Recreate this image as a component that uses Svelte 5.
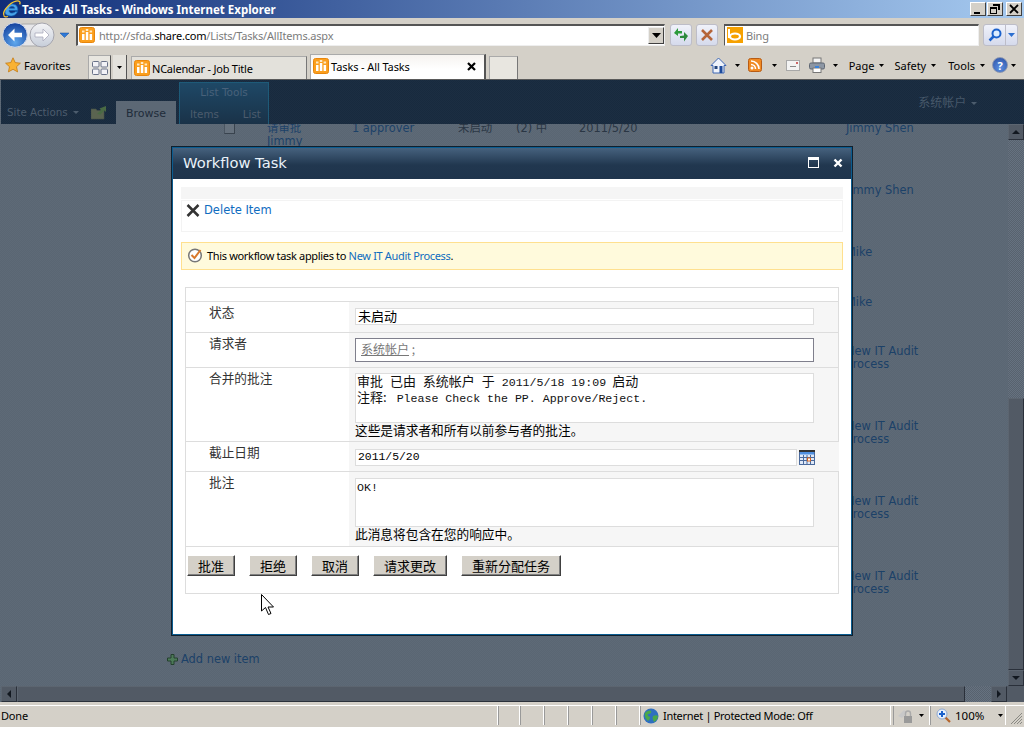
<script>
  const rows = [
    { h: 62, title: "请审批", sub: "Jimmy", approver: "1 approver", status: "未启动", prio: "(2) 中", date: "2011/5/20", who: "Jimmy Shen" },
    { h: 62, who: "Jimmy Shen" },
    { h: 50, who: "Mike" },
    { h: 49, who: "Mike" },
    { h: 75, who: "New IT Audit Process" },
    { h: 75, who: "New IT Audit Process" },
    { h: 75, who: "New IT Audit Process" },
    { h: 83, who: "New IT Audit Process" }
  ];
  const buttons = ["批准", "拒绝", "取消", "请求更改", "重新分配任务"];
  const cells = [22, 24, 24, 24, 24, 24];
</script>

{#snippet favicon()}
  <svg class="favicon" width="16" height="16" viewBox="0 0 16 16">
    <rect x="0.5" y="0.5" width="15" height="15" rx="2" fill="#fb9f1d" stroke="#e8860c" />
    <rect x="3" y="7" width="2.5" height="6" fill="#fff" />
    <rect x="6.8" y="5" width="2.5" height="8" fill="#fff" />
    <rect x="10.6" y="7" width="2.5" height="6" fill="#fff" />
    <rect x="3" y="3.5" width="2.5" height="2" fill="#ffe9c4" />
    <rect x="6.8" y="2" width="2.5" height="2" fill="#ffe9c4" />
    <rect x="10.6" y="3.5" width="2.5" height="2" fill="#ffe9c4" />
  </svg>
{/snippet}

{#snippet arrow()}
  <svg class="arrow" width="5" height="3" viewBox="0 0 5 3"><path d="M0 0H5L2.500 3Z" fill="#000" /></svg>
{/snippet}

<div class="window">
  <header class="titlebar">
    <svg class="ie" width="20" height="18" viewBox="0 0 20 18">
      <path d="M3 12.5C3 7.500 7 4 10.500 4c3.600 0 5.600 2.800 5.400 6.400H7c.2 2.800 3.800 3.600 6.400 1.200h2.400C14 15 11.500 16 9.500 16 6 16 3 15 3 12.500ZM7.200 8.200h5.400C12.400 6 8 6 7.200 8.200Z" fill="#4aa3e8" stroke="#0f5cad" stroke-width=".7" />
      <path d="M2 15C0 12 7 3 14 1.200c3-.8 5 .4 3.600 3.200M2 15c-.5 1.500 1.500 2.500 4 1.500" fill="none" stroke="#f2c230" stroke-width="1.300" />
    </svg>
    <span class="title-text">Tasks - All Tasks - Windows Internet Explorer</span>
    <div class="win-btns">
      <button class="win-btn"><svg width="10" height="10" viewBox="0 0 10 10"><rect x="1" y="8" width="6" height="2" /></svg></button>
      <button class="win-btn"><svg width="10" height="10" viewBox="0 0 10 10"><path d="M3 0h7v6H8V2H3ZM0 3h7v7H0Zm1 2v4h5V5Z" fill-rule="evenodd" /></svg></button>
      <button class="win-btn close"><svg width="10" height="10" viewBox="0 0 10 10"><path d="M1 1l8 8M9 1l-8 8" stroke="#000" stroke-width="1.800" /></svg></button>
    </div>
  </header>

  <div class="addressbar">
    <svg class="nav" width="68" height="26" viewBox="0 0 68 26">
      <defs>
        <radialGradient id="blue" cx=".5" cy=".8" r=".8"><stop offset="0" stop-color="#5fa8ee" /><stop offset="1" stop-color="#123f9c" /></radialGradient>
        <linearGradient id="pale" x1="0" y1="0" x2="0" y2="1"><stop offset="0" stop-color="#f4f4f6" /><stop offset="1" stop-color="#c6cdd9" /></linearGradient>
      </defs>
      <rect x="10" y="2" width="38" height="22" rx="11" fill="#e6e6e8" stroke="#aaa" />
      <circle cx="40" cy="13" r="12" fill="url(#pale)" stroke="#a5a5ad" />
      <path d="M33 13l6-6v4h8v4h-8v4Z" transform="rotate(180 40 13)" fill="#fff" stroke="#aab" stroke-width=".8" />
      <circle cx="13" cy="13" r="12.300" fill="url(#blue)" stroke="#d5dbe8" stroke-width="1" />
      <path d="M6 13l6.500-6.500v4.200H20v4.600h-7.500v4.200Z" fill="#fff" />
      <path d="M58 11h9l-4.500 4.500Z" fill="#2c78d8" stroke="#1b4f9a" stroke-width=".5" />
    </svg>
    <div class="address">
      {@render favicon()}
      <span class="url">http://sfda.<b>share.com</b>/Lists/Tasks/AllItems.aspx</span>
      <span class="combo"><svg width="9" height="5" viewBox="0 0 9 5"><path d="M0 0h9L4.500 5Z" /></svg></span>
    </div>
    <button class="glass first">
      <svg width="16" height="16" viewBox="0 0 16 16"><path d="M1 6l4-5v3h4v2.500H5V9Z" fill="#2c9a3c" /><path d="M15 9l-4 5.500V11H7V9l4-.5V5Z" fill="#2c8a3c" /></svg>
    </button>
    <button class="glass">
      <svg width="14" height="14" viewBox="0 0 14 14"><path d="M2 2l10 10M12 2L2 12" stroke="#b5653a" stroke-width="2.600" /></svg>
    </button>
    <div class="search">
      <svg width="16" height="16" viewBox="0 0 16 16"><rect width="16" height="16" fill="#f6a100" /><path d="M2 2v9" stroke="#fff" stroke-width="2" /><ellipse cx="8" cy="9.500" rx="5" ry="3" fill="none" stroke="#fff" stroke-width="2.200" /></svg>
      <span class="bing">Bing</span>
    </div>
    <div class="search-btn">
      <span class="mag"><svg width="14" height="14" viewBox="0 0 14 14"><circle cx="8.500" cy="5.500" r="4" fill="#dcecff" stroke="#1c62cc" stroke-width="2" /><path d="M5.500 8.500L1.500 12.500" stroke="#1c62cc" stroke-width="2.500" /></svg></span>
      <span class="mag-drop"><svg width="7" height="4" viewBox="0 0 7 4"><path d="M0 0H7L3.500 4Z" fill="#2c6fd0" /></svg></span>
    </div>
  </div>

  <div class="tabbar">
    <svg class="star" width="16" height="16" viewBox="0 0 16 16"><path d="M8 .8l2.200 4.800 5.200.6-3.900 3.500 1.100 5.200L8 12.300 3.400 14.900l1.100-5.200L.6 6.200l5.200-.6Z" fill="#f9b233" stroke="#c47a12" stroke-width=".8" /></svg>
    <span class="fav">Favorites</span>
    <div class="quick">
      <svg width="16" height="14" viewBox="0 0 16 14"><g fill="#f2f2f6" stroke="#6a7288"><rect x=".5" y=".5" width="6.500" height="5.500" rx="1" /><rect x="9" y=".5" width="6.500" height="5.500" rx="1" /><rect x=".5" y="8" width="6.500" height="5.500" rx="1" /><rect x="9" y="8" width="6.500" height="5.500" rx="1" /></g></svg>
    </div>
    <div class="quick-drop">{@render arrow()}</div>
    <div class="tab">{@render favicon()}<span>NCalendar - Job Title</span></div>
    <div class="tab active">{@render favicon()}<span>Tasks - All Tasks</span>
      <svg class="tab-x" width="9" height="9" viewBox="0 0 9 9"><path d="M1 1l7 7M8 1L1 8" stroke="#000" stroke-width="2.200" /></svg>
    </div>
    <div class="tab newtab"></div>

    <div class="tools">
      <svg class="pr3" width="17" height="17" viewBox="0 0 17 17"><path d="M8.500 1L1 8.500h2V16h11V8.500h2Z" fill="#eef2fa" stroke="#3c66b4" /><rect x="9.500" y="9" width="3" height="7" fill="#1c4a9c" /><rect x="4.500" y="9" width="3" height="3" fill="#23457c" /></svg>
      {@render arrow()}
      <svg class="gap-rss" width="14" height="14" viewBox="0 0 14 14"><rect x=".5" y=".5" width="13" height="13" rx="2" fill="#f08a24" stroke="#b85c14" /><circle cx="4" cy="10" r="1.500" fill="#fff" /><path d="M3 6.500a4.500 4.500 0 0 1 4.500 4.500M3 3a8 8 0 0 1 8 8" fill="none" stroke="#fff" stroke-width="1.600" /></svg>
      {@render arrow()}
      <svg class="gap-m" width="14" height="11" viewBox="0 0 14 11"><rect x=".5" y=".5" width="13" height="10" fill="#f3f3f3" stroke="#a8a8a8" /><rect x="4" y="6" width="6" height="1" fill="#888" /><rect x="10" y="2" width="2" height="2" fill="#c66" /></svg>
      <svg class="gap-m pr3" width="16" height="16" viewBox="0 0 16 16"><rect x="4" y="1" width="8" height="5" fill="#f3f3f3" stroke="#777" /><rect x=".5" y="6" width="15" height="6" rx="1.500" fill="#8c96a4" stroke="#5e6672" /><rect x="4" y="11" width="8" height="4.500" fill="#fff" stroke="#777" /><rect x="6" y="9" width="4" height="2" fill="#3b82d8" /></svg>
      {@render arrow()}
      <span class="menu first-menu">Page</span>{@render arrow()}
      <span class="menu safety">Safety</span>{@render arrow()}
      <span class="menu tools-menu">Tools</span>{@render arrow()}
      <span class="help">?</span>{@render arrow()}
    </div>
  </div>

  <main class="content">
    <div class="ribbon">
      <span class="site-actions">Site Actions <i class="tri"></i></span>
      <svg class="folder" width="16" height="15" viewBox="0 0 16 15"><path d="M0 4h5l1 1.500h7V14H0Z" fill="#5a6450" stroke="#465048" stroke-width=".6" /><path d="M6 9l4-4-1.500-1.500L15 1v6l-1.500-1.500-4 4Z" fill="#4a6a44" /></svg>
      <span class="browse">Browse</span>
      <div class="listtools">
        <div class="lt-head">List Tools</div>
        <div class="lt-tabs"><span>Items</span><span>List</span></div>
      </div>
      <span class="user">系统帐户 <i class="tri"></i></span>
    </div>

    <div class="mid">
      <div class="list">
        <div class="rows">
          {#each rows as r}
            <div class="row" style="height:{r.h}px">
              <span>{#if r.title}<i class="check"></i>{/if}</span>
              <span class="link">{#if r.title}{r.title}<br />{r.sub}{/if}</span>
              <span class="link">{r.approver ?? ""}</span>
              <span>{r.status ?? ""}</span>
              <span>{r.prio ?? ""}</span>
              <span>{r.date ?? ""}</span>
              <span class="link who">{r.who}</span>
            </div>
          {/each}
        </div>
        <div class="add">
          <svg width="11" height="11" viewBox="0 0 11 11"><path d="M4 .5h3v3.500h3.500v3H7v3.500H4V7H.5V4H4Z" fill="#4c7a58" stroke="#24402e" /></svg>
          <span>Add new item</span>
        </div>
      </div>
      <div class="vbar">
        <div class="sbtn"><i class="up"></i></div>
        <div class="vtrack"></div>
        <div class="vthumb"></div>
        <div class="sbtn"><i class="down"></i></div>
      </div>
    </div>

    <div class="hbar">
      <div class="sbtn"><i class="left"></i></div>
      <div class="hthumb"></div>
      <div class="htrack"></div>
      <div class="sbtn"><i class="right"></i></div>
      <div class="corner"></div>
    </div>
  </main>

  <footer class="statusbar">
    <div class="cell done">Done</div>
    {#each cells as w}
      <div class="cell" style="width:{w}px"></div>
    {/each}
    <div class="cell zone">
      <svg width="16" height="16" viewBox="0 0 16 16"><circle cx="8" cy="8" r="7.500" fill="#2f6fc0" /><path d="M2 5c2-2 4-3 6-2 1 2-1 3-3 3-1 2 1 2 2 3 0 2-1 3-2 4C3 11 1 8 2 5ZM10 8c2-1 4-1 5 0 0 3-2 5-4 6-1-2-2-4-1-6Z" fill="#4aa84a" /></svg>
      <span>Internet | Protected Mode: Off</span>
    </div>
    <div class="cell lock">
      <svg width="17" height="16" viewBox="0 0 17 16"><path d="M1 8l6-6 3 3-5 5Z" fill="#c8c8c8" /><rect x="7" y="8" width="8" height="7" fill="#9a9a9a" /><path d="M8.500 8V5.500a2.500 2.500 0 0 1 5 0V8" fill="none" stroke="#aaa" stroke-width="1.400" /></svg>
      {@render arrow()}
    </div>
    <div class="cell zoom">
      <svg width="15" height="15" viewBox="0 0 15 15"><path d="M9 9l5 5" stroke="#b5652c" stroke-width="2.200" /><circle cx="6" cy="6" r="5" fill="#e8f0fc" stroke="#8ea8d0" /><path d="M6 3v6M3 6h6" stroke="#1c62cc" stroke-width="2" /></svg>
      <span>100%</span>
      {@render arrow()}
    </div>
    <svg class="grip" width="13" height="13" viewBox="0 0 13 13"><path d="M12 1L1 12M12 4L4 12M12 7L7 12M12 10L10 12" stroke="#8a8a84" /></svg>
  </footer>

  <section class="dialog">
    <div class="dlg-head">
      <span class="dlg-title">Workflow Task</span>
      <svg class="dlg-icon" width="11" height="11" viewBox="0 0 11 11"><rect x=".5" y=".5" width="10" height="10" fill="none" stroke="#fff" /><rect x="1" y="1" width="9" height="2" fill="#fff" /></svg>
      <svg class="dlg-icon x" width="10" height="10" viewBox="0 0 10 10"><path d="M1.500 1.500l7 7M8.500 1.500l-7 7" stroke="#fff" stroke-width="2.400" /></svg>
    </div>
    <div class="dlg-body">
      <div class="strip"></div>
      <div class="toolbar">
        <svg width="14" height="13" viewBox="0 0 14 13"><path d="M1.500 1l11 11M12.500 1l-11 11" stroke="#333" stroke-width="2.500" /></svg>
        <a href="#top">Delete Item</a>
      </div>
      <div class="notice">
        <svg width="16" height="16" viewBox="0 0 16 16"><circle cx="8" cy="8.500" r="6.300" fill="#fdfdfd" stroke="#777" stroke-width="1.500" /><path d="M4.500 8l3 3 6-8" fill="none" stroke="#d8772a" stroke-width="2" /></svg>
        <span>This workflow task applies to <a href="#top">New IT Audit Process</a>.</span>
      </div>

      <div class="form">
        <div class="blank"></div>
        <div class="frow">
          <div class="label">状态</div>
          <div class="field f-input"><div class="box input cjk">未启动</div></div>
        </div>
        <div class="frow">
          <div class="label">请求者</div>
          <div class="field f-picker"><div class="box picker"><u>系统帐户</u> ;</div></div>
        </div>
        <div class="frow">
          <div class="label">合并的批注</div>
          <div class="field f-memo">
            <div class="box memo log">
              <div><span class="cjk gap-after">审批 已由 系统帐户 于</span>2011/5/18 19:09<span class="cjk gap-before">启动</span></div>
              <div><span class="cjk gap-note">注释:</span>Please Check the PP. Approve/Reject.</div>
            </div>
            <div class="hint">这些是请求者和所有以前参与者的批注。</div>
          </div>
        </div>
        <div class="frow">
          <div class="label">截止日期</div>
          <div class="field f-date date-field">
            <div class="box input date">2011/5/20</div>
            <svg width="16" height="15" viewBox="0 0 16 15">
              <rect x=".5" y=".5" width="15" height="14" fill="#dfe9f8" stroke="#4b6a9c" />
              <rect x="0" y="0" width="16" height="2" fill="#333" />
              <rect x="1" y="2" width="14" height="2.500" fill="#4f8fe0" />
              <path d="M1 7.500h14M1 10.500h14M4.500 5v9M8 5v9M11.500 5v9" stroke="#4b6a9c" />
              <rect x="8.500" y="8" width="3" height="3" fill="#fff" stroke="#d8641c" />
            </svg>
          </div>
        </div>
        <div class="frow">
          <div class="label">批注</div>
          <div class="field f-comment">
            <div class="box memo short">OK!</div>
            <div class="hint">此消息将包含在您的响应中。</div>
          </div>
        </div>
        <div class="actions">
          {#each buttons as b}
            <button class="act">{b}</button>
          {/each}
        </div>
      </div>
    </div>
  </section>

  <svg class="cursor" width="14" height="22" viewBox="0 0 14 22"><path d="M.5.500V17l4-3.500 3 7 2.500-1-3-6.500h5.500Z" fill="#fff" stroke="#000" /></svg>
</div>

<style>
  :global(body) {
    margin: 0;
    background: #fff;
  }

  button {
    padding: 0;
    margin: 0;
    font: inherit;
  }

  .window {
    position: relative;
    display: flex;
    flex-direction: column;
    width: 1024px;
    height: 727px;
    background: #d4d0c8;
    font-family: "Noto Sans", "Noto Sans CJK SC", sans-serif;
    font-size: 11px;
    color: #000;
    overflow: hidden;
  }

  .titlebar {
    display: flex;
    align-items: center;
    height: 18px;
    flex: 0 0 18px;
    padding-left: 2px;
    background: linear-gradient(90deg, #0f2d78, #a6caf0);
  }

  .title-text {
    color: #fff;
    font-weight: 700;
    font-size: 11.5px;
  }

  .win-btns {
    display: flex;
    gap: 1px;
    margin-left: auto;
    margin-right: 2px;
  }

  .win-btn {
    display: flex;
    align-items: center;
    justify-content: center;
    width: 16px;
    height: 14px;
    background: #d4d0c8;
    border: 1px solid;
    border-color: #fff #404040 #404040 #fff;
    box-sizing: border-box;
  }

  .win-btn.close {
    margin-left: 2px;
  }

  .addressbar {
    display: flex;
    align-items: center;
    height: 33px;
    flex: 0 0 33px;
    padding-left: 2px;
  }

  .address {
    display: flex;
    align-items: center;
    box-sizing: border-box;
    width: 589px;
    height: 22px;
    margin-left: 6px;
    padding-left: 1px;
    background: #fff;
    border: 1px solid;
    border-color: #555 #eee #eee #555;
    border-top-width: 2px;
    border-left-width: 2px;
  }

  .url {
    margin-left: 4px;
    color: #7c7c7c;
    font-size: 11px;
    letter-spacing: -.2px;
  }

  .url b {
    font-weight: 400;
    color: #000;
  }

  .combo {
    display: flex;
    align-items: center;
    justify-content: center;
    margin-left: auto;
    width: 16px;
    height: 17px;
    background: #d4d0c8;
    border: 1px solid;
    border-color: #eee #404040 #404040 #eee;
    box-sizing: border-box;
  }

  .glass {
    display: flex;
    align-items: center;
    justify-content: center;
    box-sizing: border-box;
    width: 22px;
    height: 22px;
    margin-left: 4px;
    background: linear-gradient(#f0f2fa, #d5daec);
    border: 1px solid #bdbdc8;
    border-radius: 3px;
  }

  .glass.first {
    margin-left: 5px;
  }

  .search {
    display: flex;
    align-items: center;
    box-sizing: border-box;
    width: 255px;
    height: 22px;
    margin-left: 6px;
    padding-left: 2px;
    background: #fff;
    border: 1px solid;
    border-color: #555 #eee #eee #555;
    border-top-width: 2px;
  }

  .bing {
    margin-left: 3px;
    color: #7c7c7c;
    font-size: 11px;
    letter-spacing: -.2px;
  }

  .search-btn {
    display: flex;
    box-sizing: border-box;
    width: 35px;
    height: 22px;
    margin-left: 4px;
    background: linear-gradient(#f0f2fa, #d5daec);
    border: 1px solid #bdbdc8;
    border-radius: 3px;
  }

  .mag {
    display: flex;
    align-items: center;
    justify-content: center;
    width: 21px;
    border-right: 1px solid #bdbdc8;
  }

  .mag-drop {
    display: flex;
    align-items: center;
    justify-content: center;
    flex: 1;
  }

  .tabbar {
    display: flex;
    align-items: flex-end;
    height: 28px;
    flex: 0 0 28px;
    padding-left: 5px;
    border-bottom: 1px solid #5a5a5a;
  }

  .star {
    align-self: center;
  }

  .fav {
    align-self: center;
    margin-left: 3px;
    width: 64px;
    font-size: 11px;
    letter-spacing: -.05px;
  }

  .quick {
    display: flex;
    align-items: center;
    justify-content: center;
    box-sizing: border-box;
    width: 23px;
    height: 24px;
    background: #e8e6e0;
    border: 1px solid #aaa;
    border-right-color: #555;
    border-bottom: 0;
  }

  .quick-drop {
    display: flex;
    align-items: center;
    justify-content: center;
    box-sizing: border-box;
    width: 14px;
    height: 24px;
    margin-left: 2px;
    border-right: 1px solid #555;
    background: #e4e2dc;
  }

  .quick-drop .arrow {
    margin-left: 0;
  }

  .tab {
    display: flex;
    align-items: center;
    box-sizing: border-box;
    width: 176px;
    height: 23px;
    margin-left: 4px;
    padding-left: 2px;
    background: #e3e1db;
    border: 1px solid #aaa;
    border-bottom: 0;
    border-right: 1px solid #777;
    font-size: 11px;
    letter-spacing: -.22px;
  }

  .tab span {
    margin-left: 2px;
  }

  .tab.active {
    position: relative;
    height: 25px;
    margin-left: 3px;
    padding-bottom: 2px;
    background: linear-gradient(#f6f3f0, #fff 60%);
    border-right: 2px solid #555;
    letter-spacing: -.1px;
  }

  .tab-x {
    margin-left: auto;
    margin-right: 8px;
  }

  .newtab {
    width: 29px;
    margin-left: 3px;
    background: #e8e6e0;
  }

  .tools {
    display: flex;
    align-items: center;
    align-self: center;
    margin-left: auto;
    padding-right: 8px;
    font-size: 11px;
  }

  .arrow {
    margin-left: 5px;
    flex: none;
  }

  .pr3 {
    margin-right: 3px;
  }

  .gap-rss {
    margin-left: 8px;
    margin-right: 5px;
  }

  .gap-m {
    margin-left: 9px;
  }

  .menu {
    margin-left: 11px;
  }

  .first-menu {
    margin-left: 11px;
  }

  .safety {
    margin-left: 10px;
  }

  .tools-menu {
    margin-left: 12px;
  }

  .help {
    display: flex;
    align-items: center;
    justify-content: center;
    width: 16px;
    height: 16px;
    margin-left: 7px;
    margin-right: -2px;
    border-radius: 50%;
    background: radial-gradient(circle at 50% 70%, #5c8fe0, #2a4fa4);
    border: 1px solid #8b96b0;
    box-sizing: border-box;
    color: #fff;
    font-weight: 700;
    font-size: 11px;
  }

  .content {
    display: flex;
    flex-direction: column;
    flex: 0 0 622px;
    box-sizing: border-box;
    padding-left: 1px;
    font-family: "DejaVu Sans", "Noto Sans CJK SC", sans-serif;
    background: repeating-conic-gradient(#5a6673 0 25%, #5e6a77 0 50%) 0 0 / 2px 2px;
  }

  .ribbon {
    display: flex;
    align-items: flex-end;
    flex: 0 0 44px;
    height: 44px;
    background: repeating-conic-gradient(#182a3e 0 25%, #1c2e42 0 50%) 0 0 / 2px 2px;
    color: #4c5c6d;
    position: relative;
  }

  .site-actions {
    align-self: flex-end;
    margin-left: 6px;
    margin-bottom: 6px;
    width: 84px;
    font-size: 10.3px;
  }

  .tri {
    display: inline-block;
    width: 0;
    height: 0;
    margin-left: 2px;
    vertical-align: 2px;
    border: 3px solid transparent;
    border-top: 3px solid #4c5c6d;
    border-bottom: 0;
  }

  .folder {
    margin-bottom: 4px;
  }

  .browse {
    box-sizing: border-box;
    width: 60px;
    height: 23px;
    margin-left: 9px;
    padding-top: 6px;
    text-align: center;
    color: #1f2c3a;
    background: #5c6875;
  }

  .listtools {
    box-sizing: border-box;
    width: 90px;
    height: 42px;
    margin-left: 3px;
    background: linear-gradient(#1e4866, #1a3248);
    border: 1px solid #1e5a78;
    border-bottom: 0;
  }

  .lt-head {
    text-align: center;
    padding-top: 3px;
    height: 17px;
    color: #48617a;
    font-size: 10.5px;
  }

  .lt-tabs {
    display: flex;
    padding: 5px 0 0 10px;
    gap: 24px;
    color: #4c5c6d;
    font-size: 10.3px;
  }

  .user {
    position: absolute;
    top: 13px;
    right: 47px;
    font-family: "Noto Sans CJK SC", sans-serif;
    font-size: 12px;
    color: #47586a;
  }

  .mid {
    display: flex;
    flex: 1;
    min-height: 0;
  }

  .list {
    flex: 1;
    overflow: hidden;
    color: #2a3644;
    font-size: 11.4px;
  }

  .rows {
    margin-top: -2px;
  }

  .row {
    display: grid;
    grid-template-columns: 43px 85px 106px 58px 63px 267px 88px;
    padding-left: 223px;
    line-height: 13px;
  }

  .link {
    color: #1c4168;
  }

  .check {
    display: inline-block;
    width: 9px;
    height: 10px;
    background: #66717d;
    border: 1px solid #39434e;
    border-top-color: #4a5561;
    border-left-color: #4a5561;
  }

  .add {
    display: flex;
    align-items: center;
    gap: 3px;
    padding-left: 166px;
    color: #1c4168;
    line-height: 13px;
  }

  .vbar {
    display: flex;
    flex-direction: column;
    flex: 0 0 16px;
    background: repeating-conic-gradient(#58626e 0 25%, #667280 0 50%) 0 0 / 2px 2px;
  }

  .sbtn {
    display: flex;
    align-items: center;
    justify-content: center;
    flex: 0 0 16px;
    box-sizing: border-box;
    width: 16px;
    height: 16px;
    background: #525a65;
    border: 1px solid;
    border-color: #5c6570 #2a303a #2a303a #5c6570;
  }

  .sbtn i {
    width: 0;
    height: 0;
    border: 4px solid transparent;
  }

  .up {
    border-bottom-color: #121820 !important;
    border-top: 0 !important;
  }

  .down {
    border-top-color: #121820 !important;
    border-bottom: 0 !important;
  }

  .left {
    border-right-color: #121820 !important;
    border-left: 0 !important;
  }

  .right {
    border-left-color: #121820 !important;
    border-right: 0 !important;
  }

  .vtrack {
    flex: 0 0 258px;
  }

  .vthumb {
    flex: 1;
    background: #525a65;
    border: 1px solid;
    border-color: #5c6570 #2a303a #2a303a #5c6570;
  }

  .hbar {
    display: flex;
    flex: 0 0 16px;
    height: 16px;
  }

  .hthumb {
    flex: 0 0 948px;
    box-sizing: border-box;
    background: #525a65;
    border: 1px solid;
    border-color: #5c6570 #2a303a #2a303a #5c6570;
  }

  .htrack {
    flex: 0 0 26px;
    background: repeating-conic-gradient(#58626e 0 25%, #667280 0 50%) 0 0 / 2px 2px;
  }

  .corner {
    flex: 1;
    background: #525a65;
  }

  .statusbar {
    display: flex;
    align-items: stretch;
    flex: 0 0 19px;
    margin-top: 3px;
    padding-bottom: 3px;
    border-top: 1px solid #fff;
    position: relative;
  }

  .cell {
    display: flex;
    align-items: center;
    box-sizing: border-box;
    border-left: 1px solid #999;
    border-right: 1px solid #fff;
  }

  .done {
    width: 498px;
    border-left: 0;
    padding-left: 1px;
    font-size: 11px;
    letter-spacing: -.2px;
  }

  .zone {
    width: 251px;
    padding-left: 2px;
    gap: 4px;
    font-size: 11px;
    letter-spacing: -.3px;
  }

  .lock {
    width: 37px;
    padding-left: 3px;
    margin-left: 2px;
  }

  .zoom {
    width: 76px;
    padding-left: 5px;
    gap: 4px;
    font-size: 11.5px;
  }

  .zoom .arrow {
    margin-left: 10px;
  }

  .grip {
    position: absolute;
    right: 1px;
    bottom: 3px;
  }

  .dialog {
    position: absolute;
    left: 171px;
    top: 146px;
    width: 682px;
    height: 490px;
    box-sizing: border-box;
    display: flex;
    flex-direction: column;
    border: 2px solid #0a5c90;
    outline: 1px solid #10202e;
    outline-offset: -1px;
    background: #fff;
    font-family: "Noto Sans CJK SC", sans-serif;
  }

  .dlg-head {
    display: flex;
    align-items: center;
    flex: 0 0 29px;
    padding: 0 0 2px 10px;
    background: linear-gradient(#46627e, #21374f 55%, #1f344c);
  }

  .dlg-title {
    font-family: "DejaVu Sans", sans-serif;
    font-size: 14.7px;
    color: #eaf2fa;
  }

  .dlg-icon {
    margin-left: auto;
    margin-right: 9px;
  }

  .dlg-icon.x {
    margin-left: 5px;
    margin-right: 8px;
  }

  .dlg-body {
    display: flex;
    flex-direction: column;
    padding: 8px 8px 0 8px;
  }

  .strip {
    height: 12px;
    background: #f5f5f5;
    flex: none;
  }

  .toolbar {
    display: flex;
    align-items: flex-start;
    gap: 4px;
    box-sizing: border-box;
    height: 32px;
    margin-top: 1px;
    padding: 3px 0 0 4px;
    border: 1px solid #f3f3f3;
  }

  a {
    color: #0f6cbf;
    text-decoration: none;
  }

  .toolbar a {
    font-family: "DejaVu Sans", sans-serif;
    font-size: 11.5px;
    line-height: 13px;
  }

  .notice {
    display: flex;
    align-items: center;
    gap: 4px;
    box-sizing: border-box;
    height: 28px;
    margin-top: 10px;
    padding: 0 0 2px 5px;
    background: #fffadc;
    border: 1px solid #ffe08f;
    font-family: "Noto Sans", sans-serif;
    font-size: 11px;
    letter-spacing: -.33px;
  }

  .form {
    box-sizing: border-box;
    height: 307px;
    margin: 17px 4px 0 4px;
    border: 1px solid #ddd;
  }

  .blank {
    height: 13px;
  }

  .frow {
    display: grid;
    grid-template-columns: 163px 1fr;
    border-top: 1px solid #ddd;
    font-size: 12.7px;
    line-height: 14px;
  }

  .label {
    padding: 3px 0 0 23px;
    color: #333;
  }

  .field {
    padding-left: 6px;
    padding-right: 24px;
    background: #f6f6f6;
  }

  .f-input {
    padding-top: 6px;
    padding-bottom: 7px;
  }

  .f-picker {
    padding-top: 5px;
    padding-bottom: 5px;
  }

  .f-memo {
    padding-top: 5px;
    padding-bottom: 4px;
  }

  .f-date {
    padding-top: 7px;
    padding-bottom: 5px;
  }

  .f-comment {
    padding-top: 6px;
    padding-bottom: 5px;
  }

  .box {
    box-sizing: border-box;
    background: #fff;
    border: 1px solid #ddd;
    color: #000;
  }

  .input {
    height: 17px;
    padding-left: 2px;
    line-height: 15px;
  }

  .picker {
    height: 24px;
    border-color: #7f7f8c;
    padding-left: 5px;
    color: #777;
    line-height: 20px;
    font-size: 12px;
  }

  .memo {
    height: 50px;
    padding: 1px 0 1px 1px;
    font-family: "Liberation Mono", monospace;
    font-size: 11.6px;
    line-height: 15px;
    color: #111;
  }

  .memo.log {
    padding-top: 0;
  }

  .memo.log > div {
    height: 16px;
    line-height: 16px;
  }

  .memo.short {
    height: 49px;
  }

  .cjk {
    font-family: "Noto Sans CJK SC", sans-serif;
    font-size: 13px;
    line-height: 1;
    word-spacing: 4px;
  }

  .gap-after {
    margin-right: 7px;
  }

  .gap-note {
    margin-right: 10px;
  }

  .gap-before {
    margin-left: 6px;
  }

  .hint {
    line-height: 14px;
  }

  .date-field {
    display: flex;
    align-items: center;
    gap: 2px;
  }

  .date {
    width: 442px;
    font-family: "Liberation Mono", monospace;
    font-size: 11.400px;
  }

  .actions {
    display: flex;
    gap: 14px;
    padding: 8px 0 0 1px;
    border-top: 1px solid #ddd;
  }

  .act {
    box-sizing: border-box;
    height: 21px;
    padding: 0 10px;
    background: #d4d0c8;
    border: 1px solid;
    border-color: #fff #404040 #404040 #fff;
    box-shadow: inset -1px -1px 0 #808080;
    font-family: "Noto Sans CJK SC", sans-serif;
    font-size: 13px;
    line-height: 17px;
    color: #000;
  }

  .cursor {
    position: absolute;
    left: 261px;
    top: 594px;
  }
</style>
